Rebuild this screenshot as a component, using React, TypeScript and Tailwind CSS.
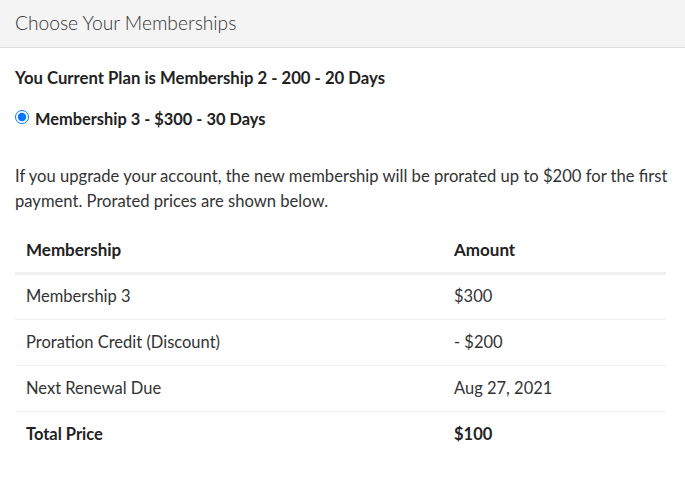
export default function App() {
  const rows = [
    { a: "Membership 3", b: "$300", bold: false },
    { a: "Proration Credit (Discount)", b: "- $200", bold: false },
    { a: "Next Renewal Due", b: "Aug 27, 2021", bold: false },
    { a: "Total Price", b: "$100", bold: true },
  ];
  return (
    <div className="w-[685px] min-h-[500px] bg-white text-[#333]" style={{ fontFamily: "Lato, 'Noto Sans', sans-serif" }}>
      <div className="h-[48px] bg-[#f4f4f4] border-b border-[#dedede] flex items-center px-[15px]">
        <h2 className="text-[19.2px] font-light text-[#333] leading-none -mt-[2px]">Choose Your Memberships</h2>
      </div>
      <div className="px-[15px]">
        <p className="mt-[18px] text-[16.7px] font-bold leading-[24px] text-[#222]">You Current Plan is Membership 2 - 200 - 20 Days</p>
        <label className="mt-[17px] flex items-center h-[24px] text-[16.4px] font-bold leading-[24px] text-[#222]">
          <input type="radio" checked readOnly className="m-0 w-[14px] h-[14px] mr-[6px] -mt-[4px]" />
          Membership 3 - $300 - 30 Days
        </label>
        <p className="mt-[33px] w-[655px] text-[16.6px] leading-[25px] text-[#333]">
          If you upgrade your account, the new membership will be prorated up to $200 for the first payment. Prorated prices are shown below.
        </p>
        <table className="mt-[13px] w-[651px] border-collapse text-[16.5px] text-[#333]">
          <thead>
            <tr className="border-b-[3px] border-[#f0f0f0]">
              <th className="h-[46px] w-[428px] px-[11px] text-left font-bold text-[17px] text-[#222]">Membership</th>
              <th className="h-[46px] px-[11px] text-left font-bold text-[17px] text-[#222]">Amount</th>
            </tr>
          </thead>
          <tbody>
            {rows.map((r, i) => (
              <tr key={r.a} className={i < rows.length - 1 ? "border-b border-[#f0f0f0]" : ""}>
                <td className={"h-[46px] px-[11px] " + (r.bold ? "font-bold text-[#222]" : "")}>{r.a}</td>
                <td className={"h-[46px] px-[11px] " + (r.bold ? "font-bold text-[#222]" : "")}>{r.b}</td>
              </tr>
            ))}
          </tbody>
        </table>
      </div>
    </div>
  );
}
